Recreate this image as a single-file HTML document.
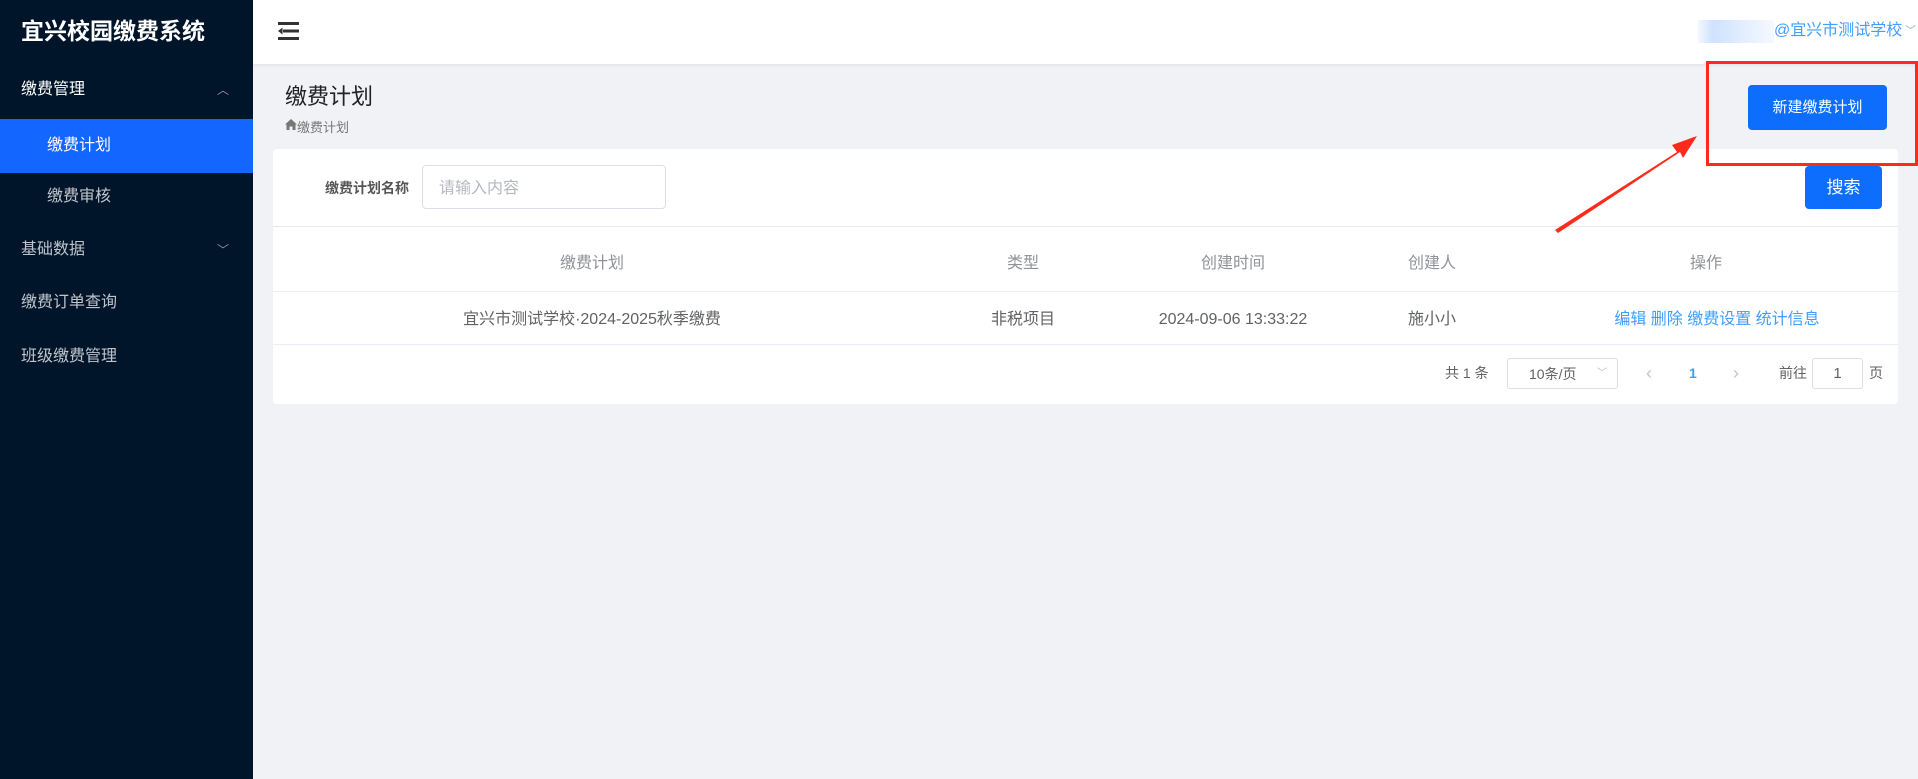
<!DOCTYPE html>
<html><head><meta charset="utf-8"><style>
*{margin:0;padding:0;box-sizing:border-box}
body{width:1918px;height:779px;overflow:hidden;background:#f0f2f5;font-family:"Liberation Sans","Noto Sans CJK SC",sans-serif;position:relative}
.abs{position:absolute}
.side{left:0;top:0;width:253px;height:779px;background:#001529}
.logo{left:21px;top:16px;color:#fff;font-size:23px;font-weight:bold;line-height:30px}
.mi{left:0;width:253px;height:54px;line-height:54px;color:#c0c4cc;font-size:16px;padding-left:21px}
.mi.sub{padding-left:47px}
.mi.act{background:#1366ff;color:#fff}
.car{position:absolute;right:24px;top:0;color:#8a94a6;font-size:12px}
.hdr{left:253px;top:0;width:1665px;height:64px;background:#fff;box-shadow:0 1px 4px rgba(0,21,41,.08)}
.card{left:273px;top:149px;width:1625px;height:255px;background:#fff;border-radius:4px}
.t{position:absolute;font-size:16px;line-height:20px;color:#606266;white-space:nowrap;transform:translateX(-50%)}
.p{position:absolute;font-size:14px;line-height:20px;color:#606266;top:363px}
.btn{position:absolute;background:#0d6efd;color:#fff;border-radius:4px;text-align:center}
</style></head><body>
<div class="abs side"></div>
<div class="abs logo">宜兴校园缴费系统</div>
<div class="abs mi" style="top:63px;color:#fff">缴费管理<span class="car">︿</span></div>
<div class="abs mi sub act" style="top:119px">缴费计划</div>
<div class="abs mi sub" style="top:170px">缴费审核</div>
<div class="abs mi" style="top:223px">基础数据<span class="car">﹀</span></div>
<div class="abs mi" style="top:276px">缴费订单查询</div>
<div class="abs mi" style="top:330px">班级缴费管理</div>

<div class="abs hdr"></div>
<svg class="abs" style="left:278px;top:22px" width="22" height="18" viewBox="0 0 22 18"><rect x="0" y="0" width="21" height="3" fill="#333"/><rect x="5" y="7.5" width="16" height="3" fill="#333"/><path d="M0 9 L4.5 5.5 L4.5 12.5Z" fill="#333"/><rect x="0" y="15" width="21" height="3" fill="#333"/></svg>
<div class="abs" style="left:1698px;top:20px;width:76px;height:23px;background:linear-gradient(90deg,#f3f7ff,#cfe2ff 20%,#e3eeff 60%,#f6f9ff);"></div>
<div class="abs" style="left:1774px;top:19px;font-size:16px;color:#409eff;line-height:24px">@宜兴市测试学校</div>
<div class="abs" style="left:1905px;top:22px;font-size:11px;color:#9ab">﹀</div>

<div class="abs" style="left:285px;top:79px;font-size:22px;color:#222">缴费计划</div>
<svg class="abs" style="left:285px;top:119px" width="12" height="11" viewBox="0 0 12 11"><path d="M6 0 L12 5.5 L10.5 5.5 L10.5 11 L7.5 11 L7.5 7.5 L4.5 7.5 L4.5 11 L1.5 11 L1.5 5.5 L0 5.5Z" fill="#777"/></svg>
<div class="abs" style="left:297px;top:117px;font-size:13px;color:#777">缴费计划</div>
<div class="btn" style="left:1748px;top:85px;width:139px;height:45px;line-height:45px;font-size:15px">新建缴费计划</div>

<div class="abs card"></div>
<div class="abs" style="left:325px;top:178px;font-size:14px;font-weight:bold;color:#555">缴费计划名称</div>
<div class="abs" style="left:422px;top:165px;width:244px;height:44px;border:1px solid #dcdfe6;border-radius:4px;font-size:16px;line-height:20px;color:#b4b8bf;padding:13px 0 0 16px">请输入内容</div>
<div class="btn" style="left:1805px;top:166px;width:77px;height:43px;line-height:43px;font-size:17px">搜索</div>
<div class="abs" style="left:273px;top:226px;width:1625px;height:1px;background:#e6e8eb"></div>
<div class="t" style="left:592px;top:254px;color:#909399">缴费计划</div>
<div class="t" style="left:1023px;top:254px;color:#909399">类型</div>
<div class="t" style="left:1233px;top:254px;color:#909399">创建时间</div>
<div class="t" style="left:1432px;top:254px;color:#909399">创建人</div>
<div class="t" style="left:1706px;top:254px;color:#909399">操作</div>
<div class="abs" style="left:273px;top:291px;width:1625px;height:1px;background:#ebeef5"></div>
<div class="t" style="left:592px;top:310px">宜兴市测试学校·2024-2025秋季缴费</div>
<div class="t" style="left:1023px;top:310px">非税项目</div>
<div class="t" style="left:1233px;top:310px">2024-09-06 13:33:22</div>
<div class="t" style="left:1432px;top:310px">施小小</div>
<div class="t" style="left:1717px;top:310px;color:#409eff">编辑 删除 缴费设置 统计信息</div>
<div class="abs" style="left:273px;top:344px;width:1625px;height:1px;background:#ebeef5"></div>
<div class="p" style="left:1445px">共 1 条</div>
<div class="abs" style="left:1507px;top:358px;width:111px;height:31px;border:1px solid #dcdfe6;border-radius:3px;font-size:14px;line-height:20px;color:#606266;padding:5px 0 0 21px">10条/页<span style="position:absolute;right:10px;top:5px;font-size:10px;color:#bbb">﹀</span></div>
<div class="p" style="left:1646px;font-size:18px;color:#c0c4cc">‹</div>
<div class="p" style="left:1689px;font-weight:bold;color:#409eff">1</div>
<div class="p" style="left:1733px;font-size:18px;color:#c0c4cc">›</div>
<div class="p" style="left:1779px">前往</div>
<div class="abs" style="left:1812px;top:358px;width:51px;height:31px;border:1px solid #dcdfe6;border-radius:3px;font-size:15px;color:#606266;text-align:center;line-height:29px">1</div>
<div class="p" style="left:1869px">页</div>

<div class="abs" style="left:1706px;top:61px;width:212px;height:105px;border:3px solid #ff2a1a"></div>
<svg class="abs" style="left:0;top:0" width="1918" height="779"><path d="M1555 230 L1677 152 L1672 145 L1697 136 L1683 158 L1680 152 L1558 233Z" fill="#ff2a1a"/></svg>
</body></html>
